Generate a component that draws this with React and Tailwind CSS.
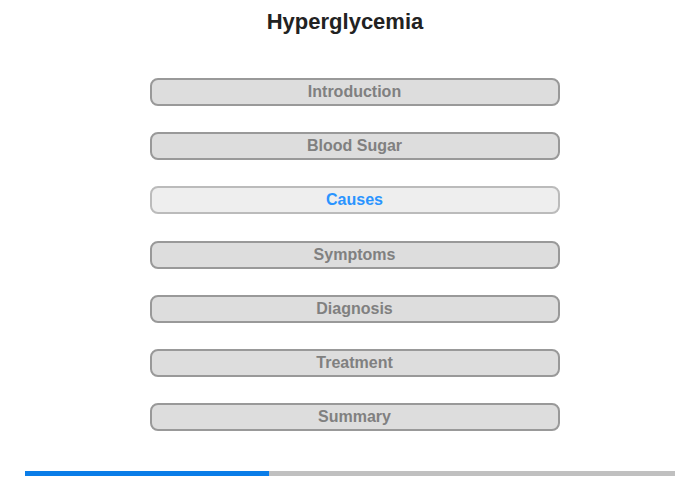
export default function App() {
  const items = ["Introduction", "Blood Sugar", "Causes", "Symptoms", "Diagnosis", "Treatment", "Summary"];
  const active = "Causes";

  return (
    <div className="w-[700px] h-[480px] bg-white flex flex-col items-center font-['Liberation_Sans',Arial,sans-serif]">
      <h1 className="mt-[9px] mr-[10px] text-[22px] leading-[26px] font-bold text-[#222222]">Hyperglycemia</h1>
      <div className="mt-[43px] ml-[9px] flex flex-col gap-[26.2px]">
        {items.map((item) =>
          item === active ? (
            <button
              key={item}
              className="w-[410px] h-[28px] rounded-[8px] border-2 border-[#bbbbbb] bg-[#eeeeee] text-[16px] font-bold text-[#2a94ff] leading-none"
            >
              {item}
            </button>
          ) : (
            <button
              key={item}
              className="w-[410px] h-[28px] rounded-[8px] border-2 border-[#999999] bg-[#dddddd] text-[16px] font-bold text-[#808080] leading-none"
            >
              {item}
            </button>
          )
        )}
      </div>
      <div className="mt-[40px] w-[650px] h-[5px] bg-[#c0c0c0] flex">
        <div className="h-full bg-[#0a7de8]" style={{ width: `${(3 / 8) * 100}%` }} />
      </div>
    </div>
  );
}
